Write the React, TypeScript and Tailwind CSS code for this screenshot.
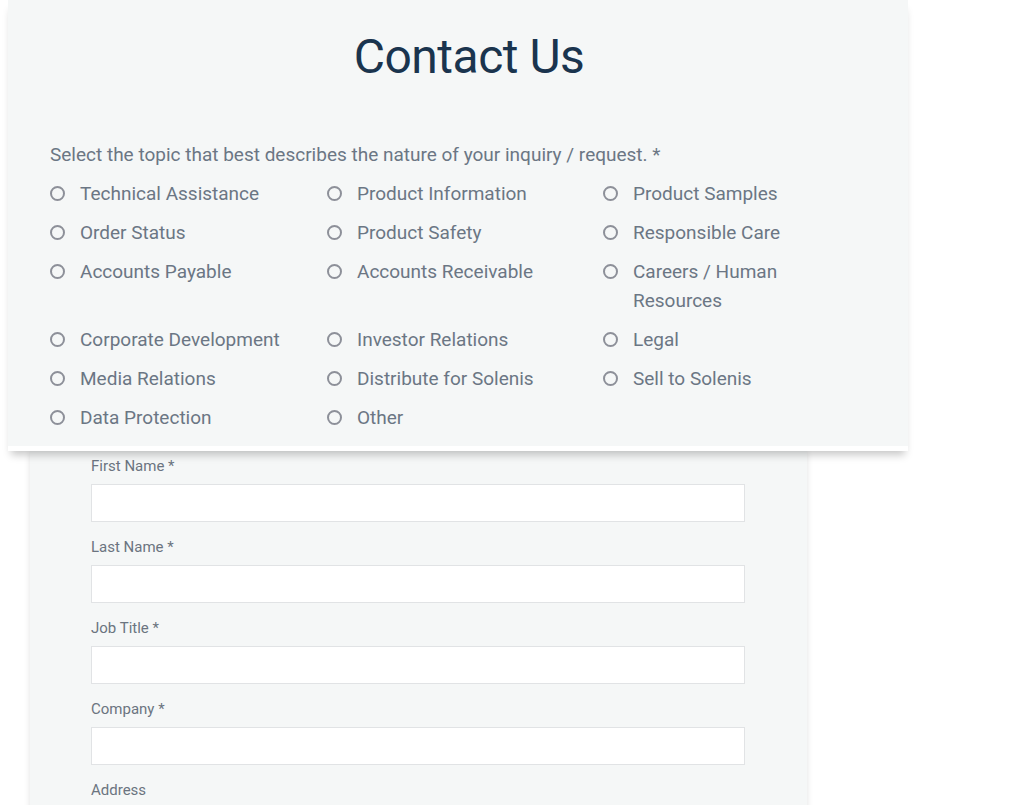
const topics: string[][] = [
  ["Technical Assistance", "Product Information", "Product Samples"],
  ["Order Status", "Product Safety", "Responsible Care"],
  ["Accounts Payable", "Accounts Receivable", "Careers / Human Resources"],
  ["Corporate Development", "Investor Relations", "Legal"],
  ["Media Relations", "Distribute for Solenis", "Sell to Solenis"],
  ["Data Protection", "Other"],
];

const fields = ["First Name *", "Last Name *", "Job Title *", "Company *", "Address"];

function Radio({ label }: { label: string }) {
  return (
    <label className="flex items-start gap-[15px] cursor-pointer">
      <span className="mt-[7px] h-[15px] w-[15px] shrink-0 rounded-full border-2 border-[#8d9099] bg-transparent" />
      <span className="max-w-[215px] leading-[29px]">{label}</span>
    </label>
  );
}

export default function App() {
  return (
    <div className="min-h-screen bg-white font-['Roboto',sans-serif] text-[#6b7684]">
      <section className="relative z-10 ml-2 w-[900px] border-b-[5px] border-white bg-[#f5f7f7] px-[42px] pb-[14px] pt-[28px] shadow-[0_7px_8px_-3px_rgba(0,0,0,0.22)]">
        <h1 className="pl-[22px] text-center text-[48px] font-normal leading-[58px] tracking-[-0.5px] text-[#1a344e]">
          Contact Us
        </h1>
        <p className="mt-[54px] text-[19px] leading-[29px]">
          Select the topic that best describes the nature of your inquiry / request. *
        </p>
        <div className="mt-[10px] flex flex-col gap-[10px] text-[19px]">
          {topics.map((row, i) => (
            <div key={i} className="grid grid-cols-[277px_276px_1fr]">
              {row.map((t) => (
                <Radio key={t} label={t} />
              ))}
            </div>
          ))}
        </div>
      </section>
      <section className="ml-[30px] w-[777px] bg-[#f5f7f7] pl-[61px] pr-[62px] pt-[5px] pb-6 shadow-[0_0_6px_rgba(0,0,0,0.12)]">
        {fields.map((f) => (
          <div key={f} className="mb-[15px]">
            <div className="text-[15px] leading-[20px] text-[#6b7480]">{f}</div>
            <input
              type="text"
              className="mt-[8px] block h-[38px] w-full border border-[#e1e3e5] bg-white outline-none"
            />
          </div>
        ))}
      </section>
    </div>
  );
}
